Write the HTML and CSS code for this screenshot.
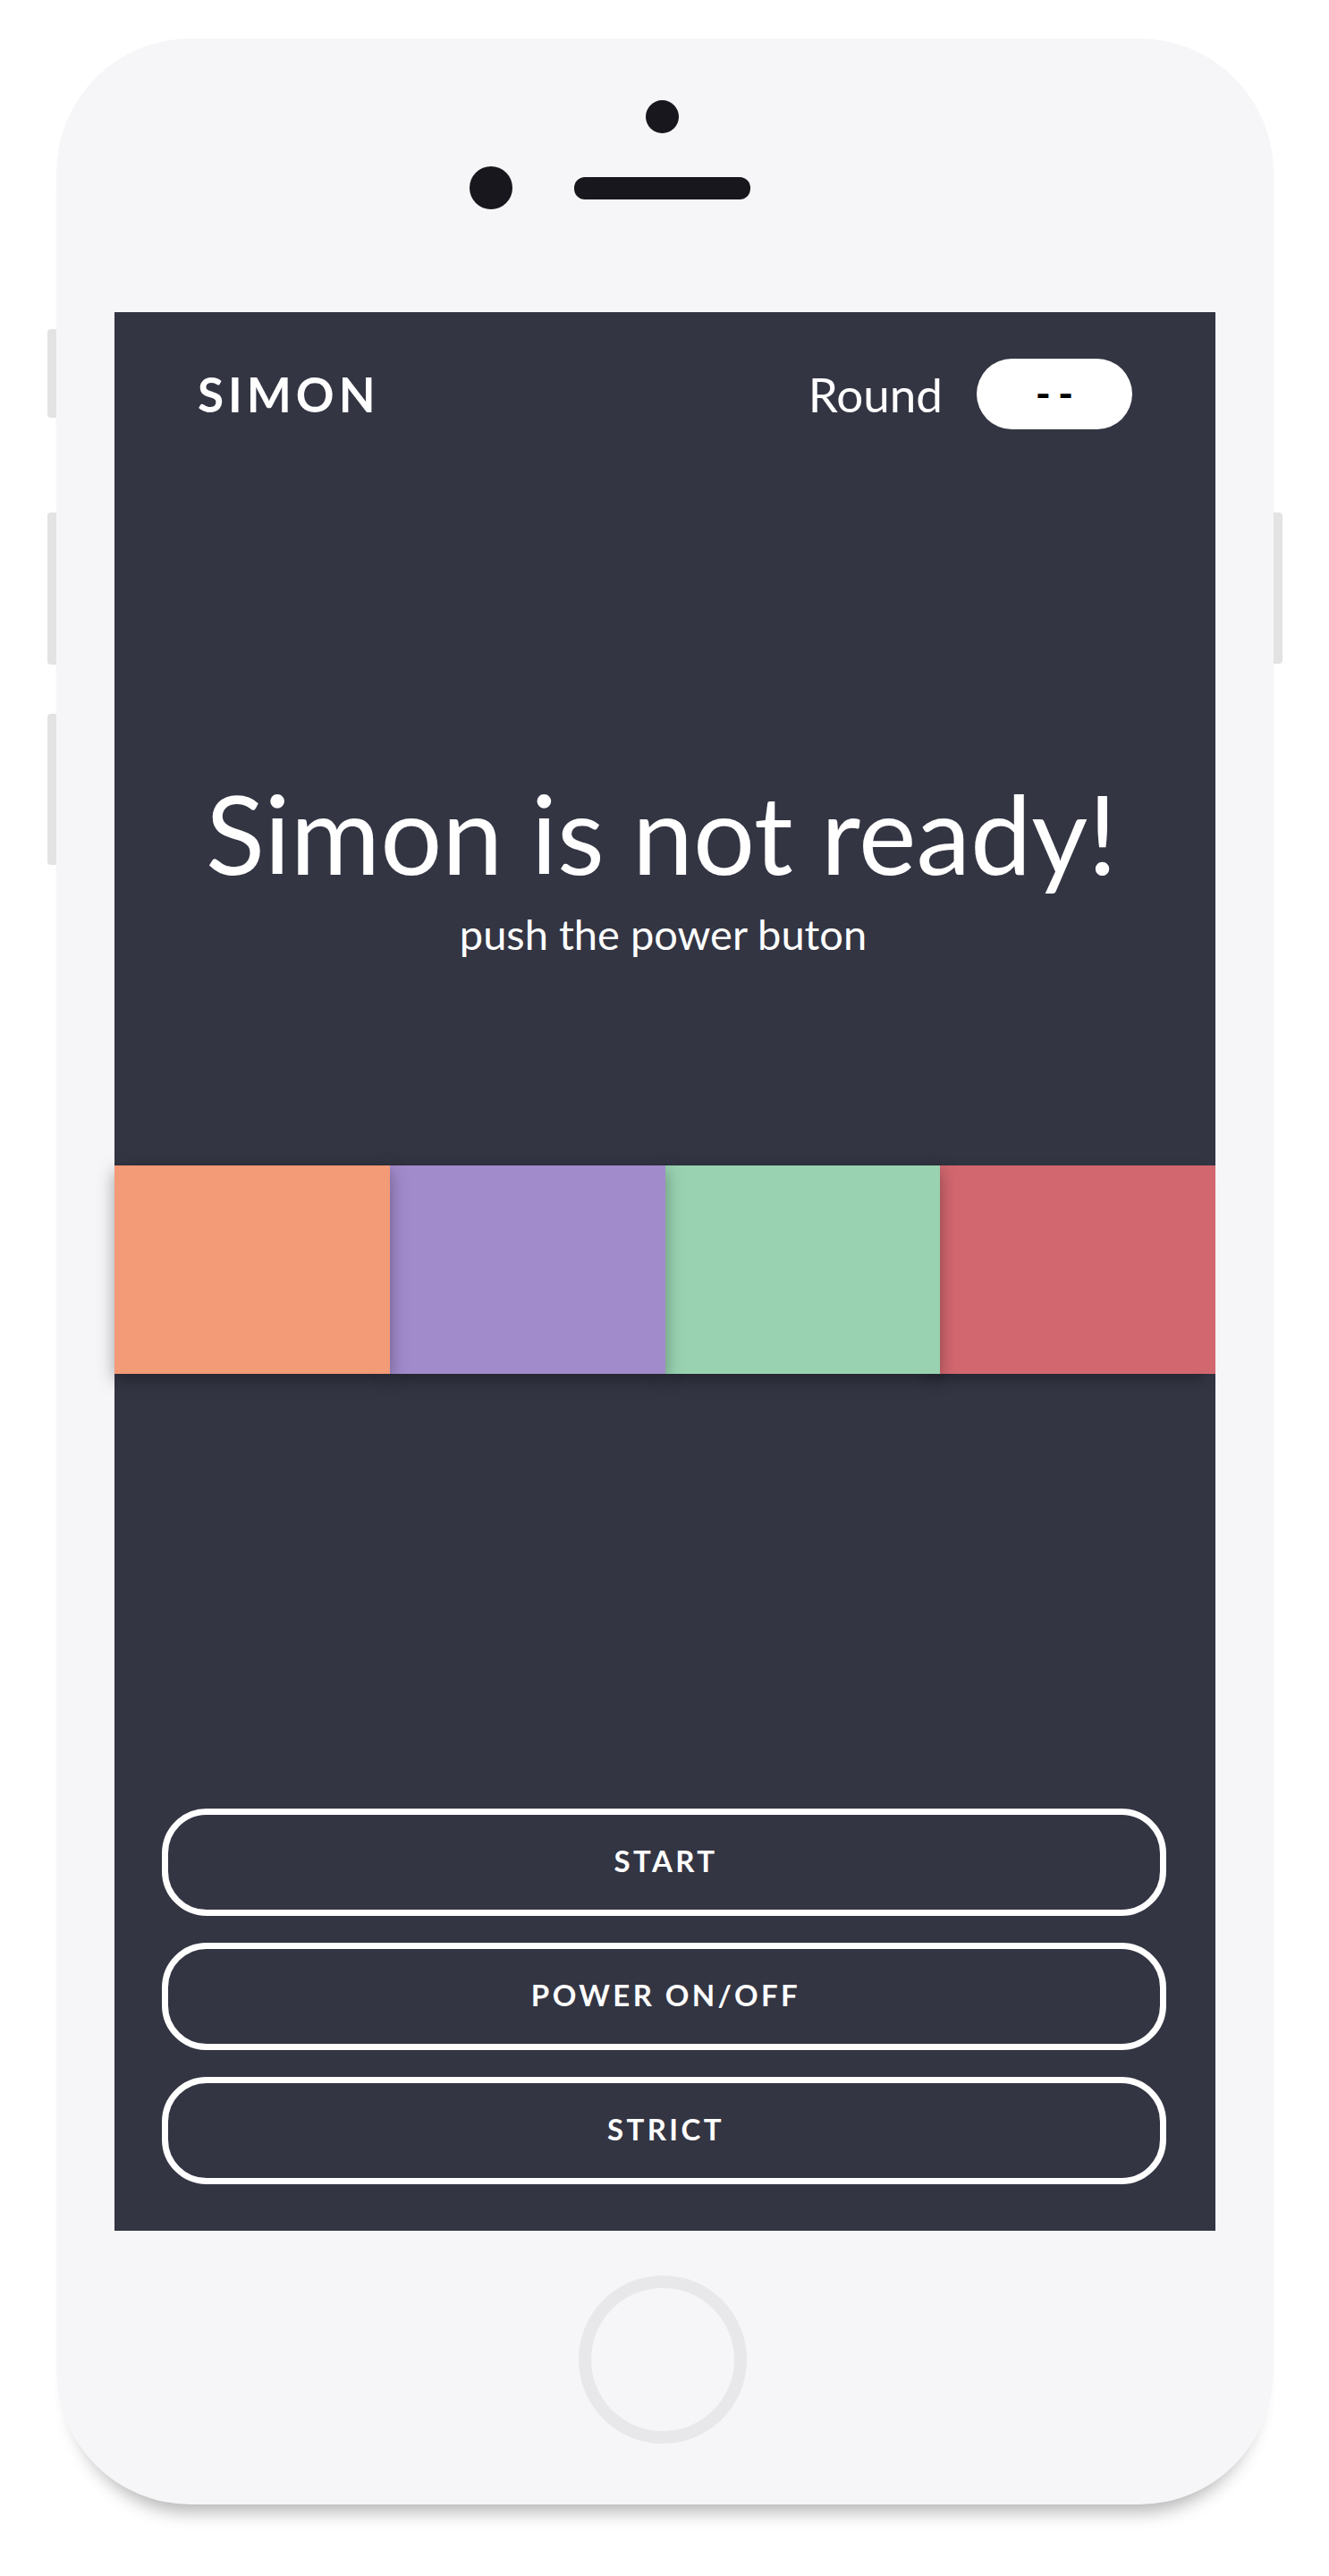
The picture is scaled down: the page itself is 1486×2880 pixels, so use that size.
FILE: index.html
```html
<!DOCTYPE html>
<html lang="en">
<head>
<meta charset="utf-8">
<title>Simon</title>
<link rel="stylesheet" href="styles.css">
</head>
<body>
<div class="phone">
  <span class="side-btn side-l1"></span>
  <span class="side-btn side-l2"></span>
  <span class="side-btn side-l3"></span>
  <span class="side-btn side-r1"></span>

  <div class="phone-top">
    <div class="sensor"></div>
    <div class="top-row">
      <div class="camera"></div>
      <div class="speaker"></div>
      <div class="camera-spacer"></div>
    </div>
  </div>

  <div class="screen">
    <header class="header">
      <div class="logo">SIMON</div>
      <div class="round">
        <span class="round-label">Round</span>
        <span class="round-pill">--</span>
      </div>
    </header>

    <div class="message">
      <h1 class="title">Simon is not ready!</h1>
      <p class="subtitle">push the power buton</p>
    </div>

    <div class="pads">
      <div class="pad pad-orange"></div>
      <div class="pad pad-purple"></div>
      <div class="pad pad-green"></div>
      <div class="pad pad-red"></div>
    </div>

    <div class="controls">
      <button class="ctrl">START</button>
      <button class="ctrl">POWER ON/OFF</button>
      <button class="ctrl">STRICT</button>
    </div>
  </div>

  <div class="phone-bottom">
    <div class="home"></div>
  </div>
</div>
</body>
</html>
```

FILE: styles.css
```css
* { box-sizing: border-box; }

html, body {
  margin: 0;
  padding: 0;
  background: #ffffff;
}

body {
  font-family: "Lato", "Open Sans", sans-serif;
  width: 1486px;
  height: 2880px;
  overflow: hidden;
}

.phone {
  position: relative;
  width: 1361px;
  height: 2757px;
  margin: 43px 0 0 63px;
  padding: 0 65px;
  background: #f6f6f8;
  border-radius: 150px;
  box-shadow: 0 26px 20px -18px rgba(0, 0, 0, 0.3);
  display: flex;
  flex-direction: column;
}

.side-btn {
  position: absolute;
  width: 10px;
  background: #e3e3e3;
}
.side-l1, .side-l2, .side-l3 { left: -10px; border-radius: 4px 0 0 4px; }
.side-l1 { top: 325px; height: 99px; }
.side-l2 { top: 530px; height: 170px; }
.side-l3 { top: 755px; height: 169px; }
.side-r1 { right: -10px; top: 530px; height: 169px; border-radius: 0 4px 4px 0; }

.phone-top {
  height: 306px;
  display: flex;
  flex-direction: column;
  align-items: center;
  padding-top: 69px;
  padding-right: 7px;
}

.sensor {
  width: 37px;
  height: 37px;
  border-radius: 50%;
  background: #17171d;
}

.top-row {
  margin-top: 37px;
  display: flex;
  align-items: center;
  gap: 69px;
}

.camera, .camera-spacer {
  width: 48px;
  height: 48px;
  border-radius: 50%;
}
.camera { background: #17171d; }

.speaker {
  width: 197px;
  height: 25px;
  border-radius: 12px;
  background: #17171d;
}

.screen {
  height: 2145px;
  background: #333543;
  display: flex;
  flex-direction: column;
  color: #ffffff;
}

.header {
  height: 182px;
  padding: 0 93px 0 93px;
  display: flex;
  align-items: center;
  justify-content: space-between;
}

.logo {
  font-size: 53px;
  font-weight: 700;
  letter-spacing: 5px;
  line-height: 1;
}

.round {
  display: flex;
  align-items: center;
  gap: 38px;
}

.round-label {
  font-size: 53px;
  font-weight: 400;
  line-height: 1;
}

.round-pill {
  width: 174px;
  height: 79px;
  border-radius: 40px;
  background: #ffffff;
  color: #000000;
  display: flex;
  align-items: center;
  justify-content: center;
  font-size: 46px;
  font-weight: 700;
  letter-spacing: 8px;
  padding-left: 8px;
  line-height: 1;
}

.message {
  margin-top: 340px;
  text-align: center;
}

.title {
  margin: 0;
  font-size: 122px;
  font-weight: 400;
  line-height: 120px;
  padding-right: 8px;
}

.subtitle {
  margin: 28px 0 0;
  padding-right: 4px;
  font-size: 47px;
  font-weight: 400;
  line-height: 50px;
}

.pads {
  margin-top: 234px;
  height: 233px;
  display: flex;
}

.pad {
  flex: 1;
  position: relative;
  box-shadow: 0 6px 18px rgba(0, 0, 0, 0.35);
}
.pad-orange { background: #f39a77; z-index: 4; }
.pad-purple { background: #a28bcb; z-index: 3; }
.pad-green  { background: #99d2b1; z-index: 2; }
.pad-red    { background: #d3676f; z-index: 1; box-shadow: -12px 6px 14px rgba(0, 0, 0, 0.3); }

.controls {
  margin-top: auto;
  padding: 0 55px 52px 53px;
  display: flex;
  flex-direction: column;
  gap: 30px;
}

.ctrl {
  height: 120px;
  border: 7px solid #ffffff;
  border-radius: 50px;
  background: transparent;
  color: #ffffff;
  font-family: "Lato", "Open Sans", sans-serif;
  font-size: 33px;
  font-weight: 700;
  letter-spacing: 3.4px;
  padding: 0 0 5px 4px;
  cursor: pointer;
}

.phone-bottom {
  flex: 1;
  display: flex;
  justify-content: center;
  padding-top: 50px;
  padding-right: 5px;
}

.home {
  width: 188px;
  height: 188px;
  border-radius: 50%;
  border: 14px solid #e8e8ea;
}
```
